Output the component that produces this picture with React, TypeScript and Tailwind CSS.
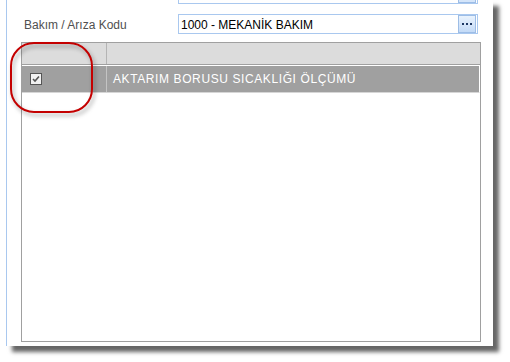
export default function App() {
  return (
    <div className="w-[510px] h-[362px] bg-white font-['Liberation_Sans',Arial,sans-serif] text-[12px]">
      <div className="relative ml-[6px] w-[487px] h-[346px] bg-white border-l border-[#a9c8ef] shadow-[6px_6px_4px_rgba(0,0,0,0.6)]">
        {/* cut-off field above */}
        <div className="ml-[171px] w-[300px] h-[4px] border-x border-b border-[#a9c8ef] flex justify-end pr-[1px]">
          <div className="w-[18px] h-[3px] border-x border-b border-[#9dbde6] bg-[#d4e5fa]" />
        </div>

        <div className="mt-[10px] flex items-center">
          <div className="w-[171px] pl-[17px] pt-[1px] text-[#505050]">Bakım / Arıza Kodu</div>
          <div className="w-[300px] h-[20px] border border-[#a9c8ef] flex items-center">
            <span className="pl-[2px] pt-[1px] text-black">1000 - MEKANİK BAKIM</span>
            <button className="ml-auto mr-[1px] w-[18px] h-full border border-[#9dbde6] bg-gradient-to-b from-[#eaf3fd] to-[#c3daf7] flex items-center justify-center gap-[2px]">
              <span className="w-[2px] h-[2px] bg-[#1d3763]" />
              <span className="w-[2px] h-[2px] bg-[#1d3763]" />
              <span className="w-[2px] h-[2px] bg-[#1d3763]" />
            </button>
          </div>
        </div>

        <div className="mt-[8px] ml-[14px] w-[460px] h-[300px] border border-[#a0a0a0] flex flex-col">
          <div className="h-[22px] bg-[#dcdcdc] border-b border-[#a0a0a0] flex">
            <div className="w-[85px] border-r border-[#b4b4b4]" />
            <div className="flex-1" />
          </div>
          <div className="h-[28px] border-t border-r border-white border-b border-b-[#d6d6d6] bg-[#a0a0a0] flex">
            <div className="w-[85px] border-r border-[#c4c4c4] flex items-center pl-[8px]">
              <div className="w-[12px] h-[12px] border border-[#555] bg-[#f2f2f2] flex items-center justify-center">
                <svg width="8" height="8" viewBox="0 0 8 8">
                  <path d="M1 4 L3 6 L7 1.5" fill="none" stroke="#555" strokeWidth="1.6" />
                </svg>
              </div>
            </div>
            <div className="flex-1 flex items-center pl-[6px] text-white tracking-[0.6px]">AKTARIM BORUSU SICAKLIĞI ÖLÇÜMÜ</div>
          </div>
        </div>

        <div className="absolute left-[3px] top-[42px] w-[83px] h-[71px] rounded-[24px] border-2 border-[#c40000] drop-shadow-[2px_3px_2px_rgba(0,0,0,0.35)]" />
      </div>
    </div>
  );
}
